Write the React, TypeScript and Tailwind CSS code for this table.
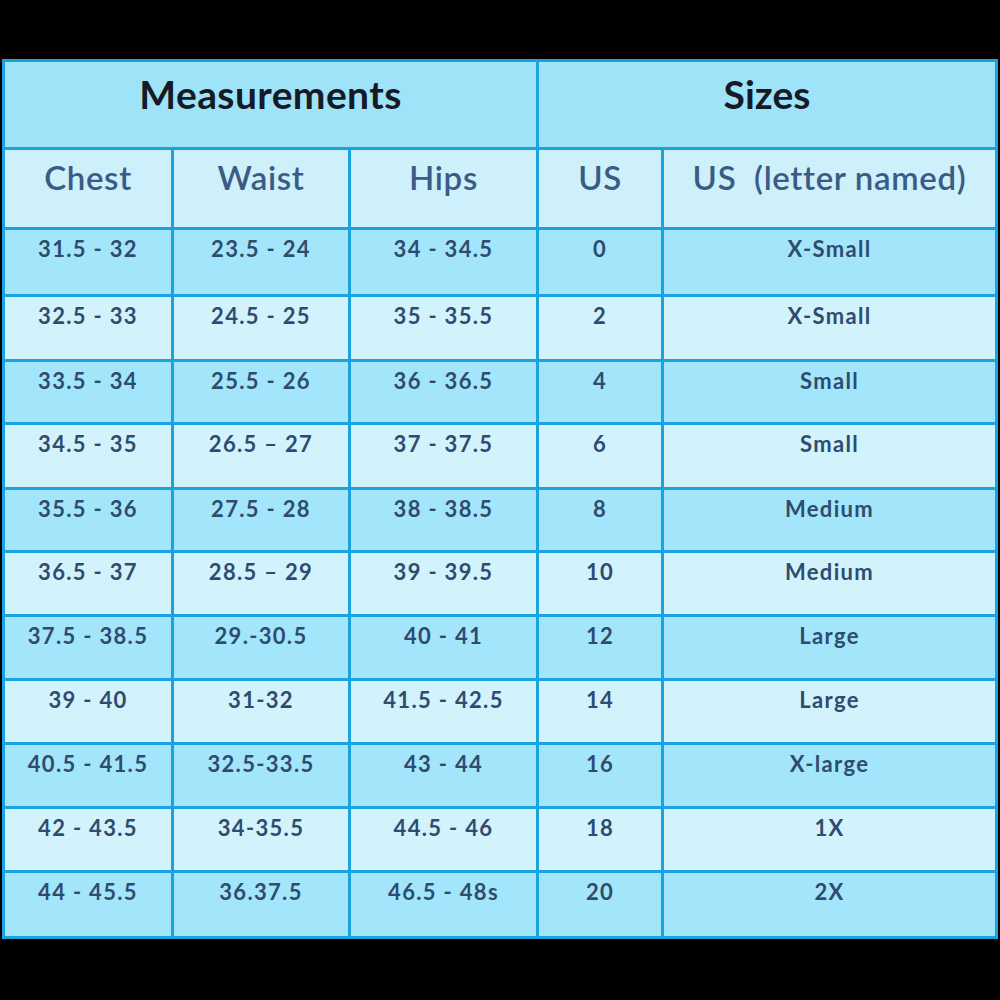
const rows: Array<{ cells: string[]; h: string; dark: boolean }> = [
  { cells: ['31.5 - 32', '23.5 - 24', '34 - 34.5', '0', 'X-Small'], h: 'h-[64px]', dark: true },
  { cells: ['32.5 - 33', '24.5 - 25', '35 - 35.5', '2', 'X-Small'], h: 'h-[62px]', dark: false },
  { cells: ['33.5 - 34', '25.5 - 26', '36 - 36.5', '4', 'Small'], h: 'h-[60px]', dark: true },
  { cells: ['34.5 - 35', '26.5 \u2013 27', '37 - 37.5', '6', 'Small'], h: 'h-[62px]', dark: false },
  { cells: ['35.5 - 36', '27.5 - 28', '38 - 38.5', '8', 'Medium'], h: 'h-[60px]', dark: true },
  { cells: ['36.5 - 37', '28.5 \u2013 29', '39 - 39.5', '10', 'Medium'], h: 'h-[61px]', dark: false },
  { cells: ['37.5 - 38.5', '29.-30.5', '40 - 41', '12', 'Large'], h: 'h-[61px]', dark: true },
  { cells: ['39 - 40', '31-32', '41.5 - 42.5', '14', 'Large'], h: 'h-[61px]', dark: false },
  { cells: ['40.5 - 41.5', '32.5-33.5', '43 - 44', '16', 'X-large'], h: 'h-[61px]', dark: true },
  { cells: ['42 - 43.5', '34-35.5', '44.5 - 46', '18', '1X'], h: 'h-[61px]', dark: false },
  { cells: ['44 - 45.5', '36.37.5', '46.5 - 48s', '20', '2X'], h: 'h-[63px]', dark: true },
];

const colHeads = ['Chest', 'Waist', 'Hips', 'US', 'US\u00a0 (letter named)'];

export default function App() {
  return (
    <div className="w-[1000px] h-[1000px] bg-black pt-[59px] pl-[2px]" style={{ fontFamily: 'Lato, "Open Sans", sans-serif' }}>
      <div className="grid grid-cols-[166px_174px_185px_122px_331px] gap-[3px] p-[3px] bg-[#1aa3de] w-[996px]">
        <div className="col-span-3 h-[85px] bg-[#9fe3f9] flex justify-center pt-[13px]">
          <span className="text-[39px] font-bold text-[#151a24] leading-none tracking-[0.01em]">Measurements</span>
        </div>
        <div className="col-span-2 h-[85px] bg-[#9fe3f9] flex justify-center pt-[13px]">
          <span className="text-[39px] font-bold text-[#151a24] leading-none">Sizes</span>
        </div>
        {colHeads.map((c) => (
          <div key={c} className="h-[77px] bg-[#cdf0fb] flex justify-center pt-[11px]">
            <span className="text-[33px] font-semibold text-[#3b5b85] leading-none tracking-[0.02em]">{c}</span>
          </div>
        ))}
        {rows.map((r, i) =>
          r.cells.map((c, j) => (
            <div
              key={`${i}-${j}`}
              className={`${r.h} ${r.dark ? 'bg-[#a3e5fa]' : 'bg-[#d2f2fc]'} flex justify-center pt-[8px]`}
            >
              <span className="text-[22px] font-bold text-[#2f4b6e] leading-none tracking-[0.06em]">{c}</span>
            </div>
          ))
        )}
      </div>
    </div>
  );
}
